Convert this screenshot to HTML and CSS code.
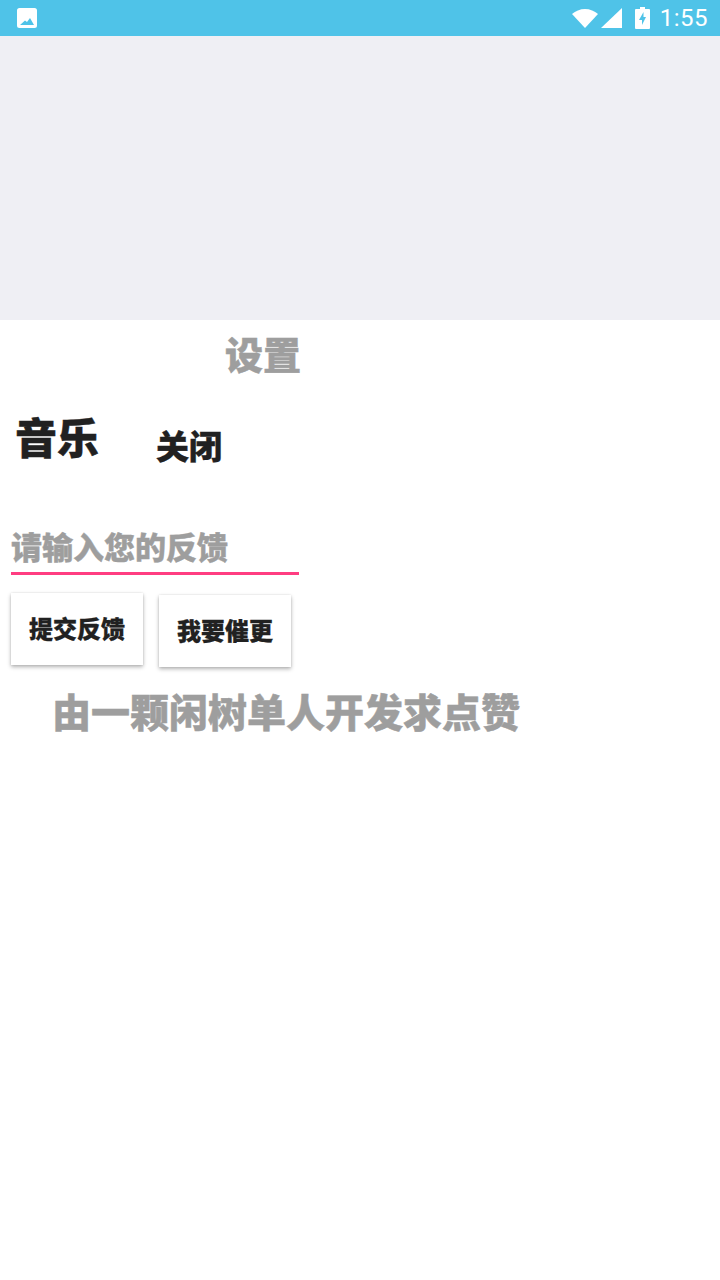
FILE: index.html
```html
<!DOCTYPE html>
<html lang="zh-CN">
<head>
<meta charset="utf-8">
<title>设置</title>
<link rel="stylesheet" href="styles.css">
</head>
<body>
<header class="status-bar">
  <svg class="pic-icon" width="20" height="20" viewBox="0 0 20 20"><path fill="#fff" fill-rule="evenodd" d="M2.500 0h15A2.500 2.500 0 0 1 20 2.500v15a2.500 2.500 0 0 1-2.500 2.500h-15A2.500 2.500 0 0 1 0 17.500v-15A2.500 2.500 0 0 1 2.500 0zM3 17h14l-4-7-3 4-2-1.500z"/></svg>
  <div class="status-right">
    <svg class="wifi" width="26" height="19" viewBox="0 0 26 19"><path fill="#fff" d="M0 5C3.500 2 8 0 13 0s9.500 2 13 5L13 19z"/></svg>
    <svg class="signal" width="21" height="20" viewBox="0 0 21 20"><path fill="#fff" d="M21 0v20H0z"/></svg>
    <svg class="battery" width="15" height="22" viewBox="0 0 15 22"><path fill="#fff" fill-rule="evenodd" d="M5 0h5v2h4a1 1 0 0 1 1 1v18a1 1 0 0 1-1 1H1a1 1 0 0 1-1-1V3a1 1 0 0 1 1-1h4zM8.500 5 4 13h3v5l4-8H8.500z"/></svg>
    <span class="clock">1:55</span>
  </div>
</header>
<div class="banner"></div>
<main class="content">
  <h1 class="title">设置</h1>
  <div class="music-row">
    <span class="music-label">音乐</span>
    <span class="music-state">关闭</span>
  </div>
  <div class="field"><span class="hint">请输入您的反馈</span></div>
  <div class="buttons">
    <button class="btn">提交反馈</button>
    <button class="btn btn-low">我要催更</button>
  </div>
  <p class="credit">由一颗闲树单人开发求点赞</p>
</main>
</body>
</html>
```
FILE: styles.css
```css
* { box-sizing: border-box; }
html, body { margin: 0; padding: 0; }
body {
  width: 720px;
  height: 1280px;
  background: #fff;
  font-family: "Noto Sans CJK SC", "Noto Sans", sans-serif;
  font-weight: 900;
  overflow: hidden;
}
.status-bar {
  height: 36px;
  background: #4fc3e8;
  display: flex;
  align-items: center;
  justify-content: space-between;
  padding: 0 12px 0 17px;
}
.status-right { display: flex; align-items: center; }
.wifi { margin-right: 3px; }
.signal { margin-right: 13px; }
.battery { margin-right: 10px; }
.clock {
  font-family: Roboto, sans-serif;
  font-weight: 400;
  font-size: 24px;
  color: #fff;
  letter-spacing: 0.5px;
}
.banner { height: 284px; background: #efeff4; }
.content { display: flex; flex-direction: column; align-items: flex-start; }
.title {
  margin: 11px 0 0 225px;
  font-size: 38px;
  line-height: 44px;
  font-weight: 900;
  color: #9e9e9e;
  -webkit-text-stroke: 0.5px #9e9e9e;
}
.music-row { display: flex; margin: 31px 0 0 15px; }
.music-label {
  font-size: 42px;
  line-height: 60px;
  color: #212121;
  -webkit-text-stroke: 0.5px #212121;
}
.music-state {
  font-size: 33px;
  line-height: 44px;
  margin: 17px 0 0 57px;
  color: #212121;
  -webkit-text-stroke: 0.4px #212121;
}
.field {
  margin: 59px 0 0 11px;
  width: 288px;
  height: 49px;
  border-bottom: 3px solid #ff3d81;
}
.hint {
  display: block;
  font-size: 31px;
  line-height: 40px;
  color: #9e9e9e;
  -webkit-text-stroke: 0.4px #9e9e9e;
}
.buttons { display: flex; gap: 16px; margin: 18px 0 0 11px; align-items: flex-start; }
.btn {
  width: 132px;
  height: 72px;
  border: 0;
  padding: 0 0 3px;
  background: #fff;
  color: #212121;
  font-family: inherit;
  font-weight: 900;
  font-size: 24px;
  -webkit-text-stroke: 0.3px #212121;
  box-shadow: 0 2px 4px rgba(0, 0, 0, 0.3), 0 0 2px rgba(0, 0, 0, 0.1);
}
.btn-low { margin-top: 2px; }
.credit {
  margin: 15px 0 0 52px;
  font-size: 39px;
  line-height: 56px;
  color: #9e9e9e;
  -webkit-text-stroke: 0.5px #9e9e9e;
}
```
